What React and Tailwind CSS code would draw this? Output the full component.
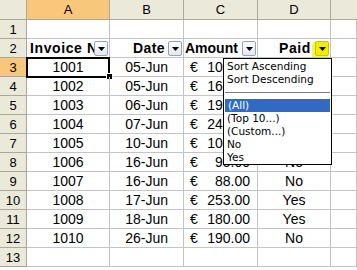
import React from 'react';

const rows = [
  { id: '1001', date: '05-Jun', amt: '105.00', paid: 'No' },
  { id: '1002', date: '05-Jun', amt: '160.00', paid: 'Yes' },
  { id: '1003', date: '06-Jun', amt: '195.00', paid: 'No' },
  { id: '1004', date: '07-Jun', amt: '240.00', paid: 'Yes' },
  { id: '1005', date: '10-Jun', amt: '100.00', paid: 'No' },
  { id: '1006', date: '16-Jun', amt: '95.00', paid: 'No' },
  { id: '1007', date: '16-Jun', amt: '88.00', paid: 'No' },
  { id: '1008', date: '17-Jun', amt: '253.00', paid: 'Yes' },
  { id: '1009', date: '18-Jun', amt: '180.00', paid: 'Yes' },
  { id: '1010', date: '26-Jun', amt: '190.00', paid: 'No' },
];

const cell = 'h-[19px] border-r border-b border-[#c4c4c4] box-border overflow-hidden whitespace-nowrap leading-[19px]';
const rowHead = 'w-[27px] h-[19px] shrink-0 border-r border-b border-[#aca899] box-border text-center text-[13px] leading-[19px]';

const FilterButton = ({ hot }) => (
  <div
    className={`w-[14px] h-[15px] shrink-0 mt-[1px] flex items-center justify-center rounded-[2px] border ${
      hot
        ? 'bg-[#f2ee00] border-[#c8c400] shadow-[-2px_2px_0_1px_#f6f25a]'
        : 'bg-gradient-to-b from-white to-[#e2e7f0] border-[#8ea4c0]'
    }`}
  >
    <svg width="7" height="4" viewBox="0 0 7 4">
      <path d="M0 0h7L3.5 4z" fill="#000" />
    </svg>
  </div>
);

const App = () => {
  return (
    <div
      className="relative w-[357px] h-[270px] overflow-hidden bg-white text-[14px] text-black"
      style={{ fontFamily: '"Liberation Sans", Arial, sans-serif' }}
    >
      {/* column headers */}
      <div className="flex h-[20px] text-[13px]">
        <div className="w-[27px] shrink-0 bg-[#ebe9da] border-r border-b border-[#aca899] box-border" />
        <div className="w-[83px] shrink-0 bg-[#f8c77c] border-r border-b border-[#aca899] box-border text-center leading-[19px]">A</div>
        <div className="w-[74px] shrink-0 bg-[#ebe9da] border-r border-b border-[#aca899] box-border text-center leading-[19px]">B</div>
        <div className="w-[74px] shrink-0 bg-[#ebe9da] border-r border-b border-[#aca899] box-border text-center leading-[19px]">C</div>
        <div className="w-[73px] shrink-0 bg-[#ebe9da] border-r border-b border-[#aca899] box-border text-center leading-[19px]">D</div>
        <div className="flex-1 bg-[#ebe9da] border-b border-[#aca899] box-border" />
      </div>

      {/* row 1 */}
      <div className="flex">
        <div className={`${rowHead} bg-[#ebe9da]`}>1</div>
        <div className={`${cell} w-[83px]`} />
        <div className={`${cell} w-[74px]`} />
        <div className={`${cell} w-[74px]`} />
        <div className={`${cell} w-[73px]`} />
        <div className={`${cell} flex-1`} />
      </div>

      {/* row 2: filter headers */}
      <div className="flex font-bold">
        <div className={`${rowHead} bg-[#ebe9da] font-normal`}>2</div>
        <div className={`${cell} w-[83px] flex items-center pl-[3px] pr-[1px]`}>
          <span className="flex-1 overflow-hidden tracking-[0.6px]">Invoice No</span>
          <FilterButton />
        </div>
        <div className={`${cell} w-[74px] flex items-center justify-end gap-[3px] pr-[1px]`}>
          <span className="tracking-[0.4px]">Date</span>
          <FilterButton />
        </div>
        <div className={`${cell} w-[74px] flex items-center gap-[3px] pl-[1px] pr-[1px]`}>
          <span className="flex-1">Amount</span>
          <FilterButton />
        </div>
        <div className={`${cell} w-[73px] flex items-center justify-end gap-[4px] pr-[1px]`}>
          <span className="tracking-[0.6px]">Paid</span>
          <FilterButton hot />
        </div>
        <div className={`${cell} flex-1`} />
      </div>

      {/* data rows */}
      {rows.map((r, i) => (
        <div key={r.id} className="flex">
          <div className={`${rowHead} ${i === 0 ? 'bg-[#f8c77c]' : 'bg-[#ebe9da]'}`}>{i + 3}</div>
          <div className={`${cell} w-[83px] text-center relative !overflow-visible`}>
            {r.id}
            {i === 0 && (
              <>
                <div className="absolute left-[-1px] top-[-1px] w-[84px] h-[21px] border-2 border-black" />
                <div className="absolute right-[-4px] bottom-[-4px] w-[5px] h-[5px] bg-black border border-white box-content" />
              </>
            )}
          </div>
          <div className={`${cell} w-[74px] text-right pr-[15px]`}>{r.date}</div>
          <div className={`${cell} w-[74px] flex justify-between pl-[6px] pr-[7px]`}>
            <span>€</span>
            <span>{r.amt}</span>
          </div>
          <div className={`${cell} w-[73px] text-center`}>{r.paid}</div>
          <div className={`${cell} flex-1`} />
        </div>
      ))}

      {/* row 13 */}
      <div className="flex">
        <div className={`${rowHead} bg-[#ebe9da]`}>13</div>
        <div className={`${cell} w-[83px]`} />
        <div className={`${cell} w-[74px]`} />
        <div className={`${cell} w-[74px]`} />
        <div className={`${cell} w-[73px]`} />
        <div className={`${cell} flex-1`} />
      </div>

      {/* autofilter dropdown */}
      <div
        className="absolute left-[223px] top-[58px] w-[109px] h-[107px] bg-white border border-black text-[10.5px] leading-[13px] flex flex-col pt-[1px]"
        style={{ fontFamily: '"DejaVu Sans", Tahoma, sans-serif' }}
      >
        <div className="pl-[3px]">Sort Ascending</div>
        <div className="pl-[3px]">Sort Descending</div>
        <div className="h-[6px] shrink-0" />
        <div className="mx-[1px] h-px shrink-0 bg-[#808080]" />
        <div className="h-[6px] shrink-0" />
        <div className="pl-[3px] mx-px bg-[#316ac5] text-white">(All)</div>
        <div className="pl-[3px]">(Top 10...)</div>
        <div className="pl-[3px]">(Custom...)</div>
        <div className="pl-[3px]">No</div>
        <div className="pl-[3px]">Yes</div>
      </div>
    </div>
  );
};

export default App;
